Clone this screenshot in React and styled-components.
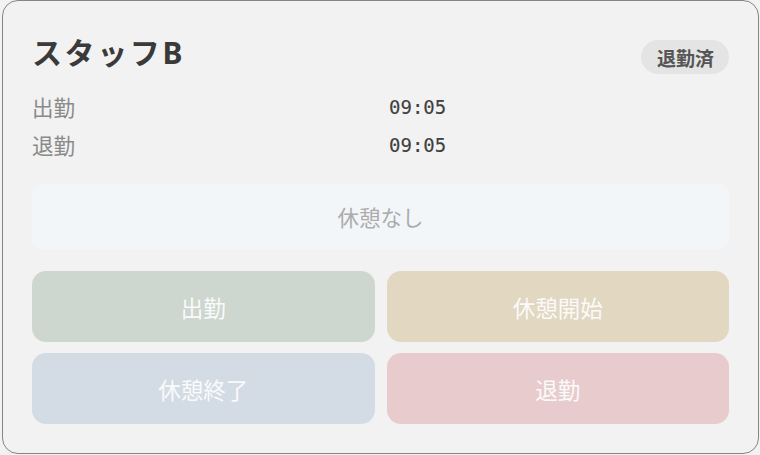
import React from "react";
import styled, { createGlobalStyle } from "styled-components";

const Global = createGlobalStyle`
  html, body { margin: 0; padding: 0; background: #f2f2f2; }
  body { font-family: "Noto Sans CJK JP", "Noto Sans", sans-serif; }
  * { box-sizing: border-box; }
`;

const Card = styled.div`
  width: 757px;
  height: 454px;
  margin-left: 2px;
  border: 1.5px solid #858585;
  border-radius: 16px;
  background: #f2f2f2;
  padding: 28px 29px 28px 29px;
  display: flex;
  flex-direction: column;
`;

const Header = styled.div`
  display: flex;
  justify-content: space-between;
  align-items: center;
  height: 48px;
`;

const Name = styled.h1`
  margin: 0;
  font-family: "Noto Sans", "Noto Sans CJK JP", sans-serif;
  font-size: 30px;
  font-weight: 700;
  letter-spacing: 2.6px;
  color: #3a3a3a;
  line-height: 1;
`;

const Badge = styled.span`
  display: inline-flex;
  align-items: center;
  height: 34px;
  padding: 0 15px 0 16px;
  margin-top: 8px;
  border-radius: 17px;
  background: #e4e4e4;
  color: #555;
  font-size: 19px;
  font-weight: 700;
`;

const Times = styled.div`
  display: grid;
  grid-template-columns: 1fr 1fr;
  column-gap: 17px;
  margin-top: 11px;
`;

const Label = styled.span`
  font-size: 21.5px;
  line-height: 38px;
  color: #8a8a8a;
`;

const Value = styled.span`
  font-family: "DejaVu Sans Mono", monospace;
  font-size: 19px;
  line-height: 38px;
  color: #404040;
  -webkit-text-stroke: 0.12px #404040;
`;

const BreakBox = styled.div`
  margin-top: 20px;
  height: 65px;
  border-radius: 10px;
  background: #f3f6f9;
  display: flex;
  align-items: center;
  justify-content: center;
  font-size: 21.5px;
  color: #acacac;
`;

const Actions = styled.div`
  margin-top: 22px;
  display: grid;
  grid-template-columns: 1fr 1fr;
  gap: 11px 12px;
`;

const ActionButton = styled.button`
  height: 71px;
  border: none;
  border-radius: 14px;
  background: ${(p) => p.$bg};
  color: #fafafa;
  font-family: "Noto Sans CJK JP", "Noto Sans", sans-serif;
  font-size: 22.5px;
  cursor: pointer;
`;

const times = [
  ["出勤", "09:05"],
  ["退勤", "09:05"],
];

const actions = [
  ["出勤", "#cdd7cf"],
  ["休憩開始", "#e2d7c1"],
  ["休憩終了", "#d3dce5"],
  ["退勤", "#e8cccd"],
];

export default function App() {
  return (
    <>
      <Global />
      <Card>
        <Header>
          <Name>スタッフB</Name>
          <Badge>退勤済</Badge>
        </Header>
        <Times>
          {times.map(([k, v]) => (
            <React.Fragment key={k}>
              <Label>{k}</Label>
              <Value>{v}</Value>
            </React.Fragment>
          ))}
        </Times>
        <BreakBox>休憩なし</BreakBox>
        <Actions>
          {actions.map(([t, c]) => (
            <ActionButton key={t} $bg={c}>
              {t}
            </ActionButton>
          ))}
        </Actions>
      </Card>
    </>
  );
}
